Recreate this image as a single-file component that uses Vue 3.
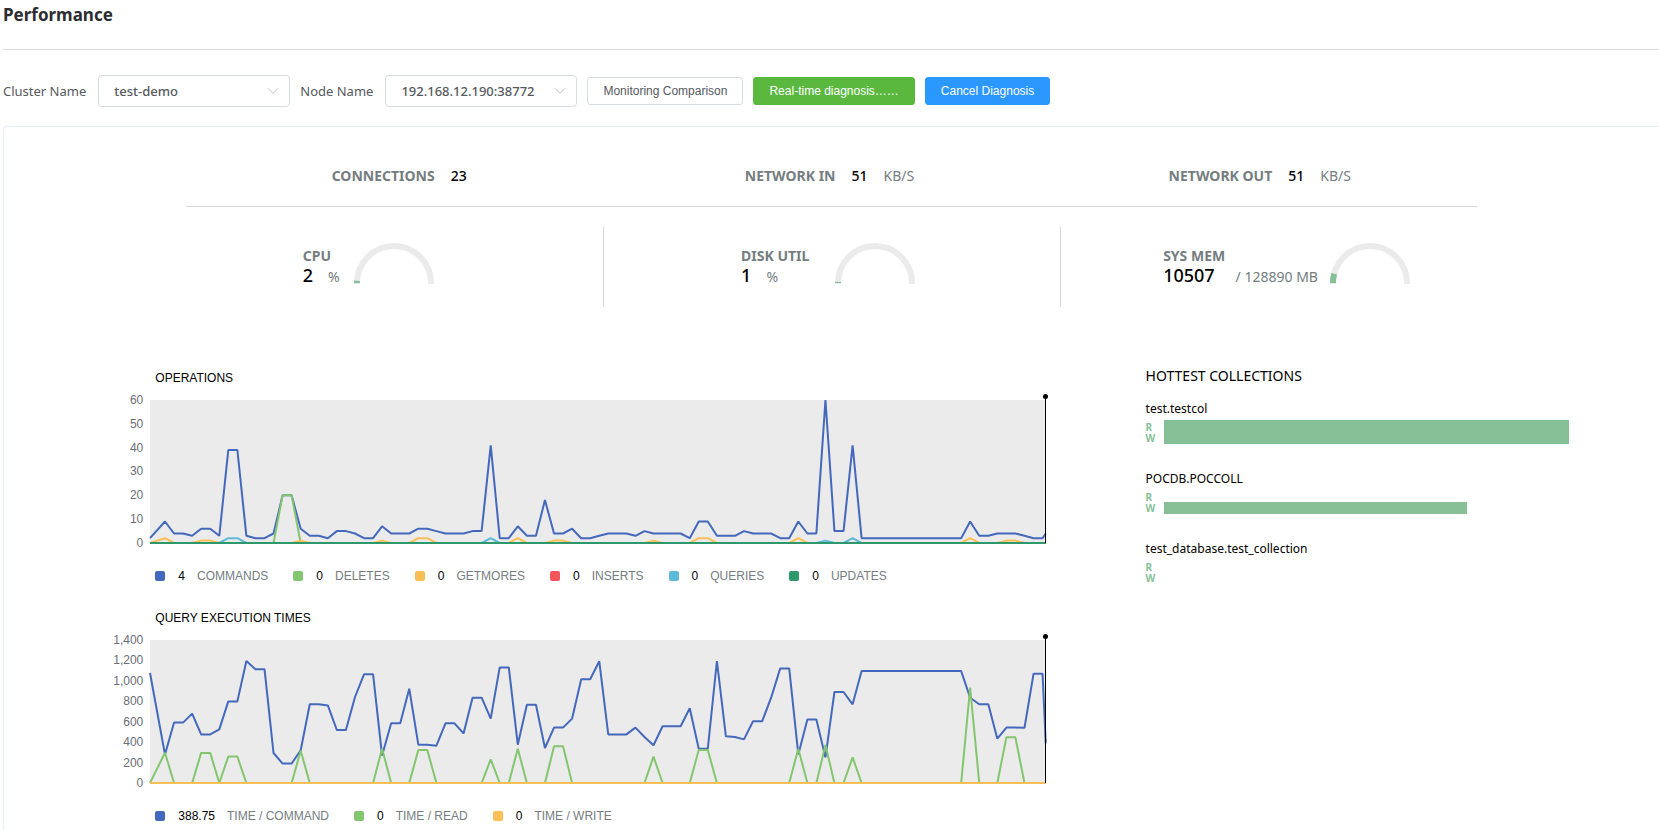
<script setup>
import { ref } from 'vue'

const cluster = ref('test-demo')
const node = ref('192.168.12.190:38772')

const traffic = [
  { label: 'CONNECTIONS', value: '23', unit: '' },
  { label: 'NETWORK IN', value: '51', unit: 'KB/S' },
  { label: 'NETWORK OUT', value: '51', unit: 'KB/S' }
]

const gauges = [
  { key: 'cpu', label: 'CPU', value: '2', unit: '%', percent: 2 },
  { key: 'disk', label: 'DISK UTIL', value: '1', unit: '%', percent: 1 },
  { key: 'mem', label: 'SYS MEM', value: '10507', unit: '/ 128890 MB', percent: 8 }
]

// Samples arrive every STEP units; the first and last ones sit on the plot edges.
const WIDTH = 897
const HEIGHT = 143
const FIRST = 15
const STEP = 9.06

// Each point is [sample index, value]; -2 is the left edge and 99 the right edge.
function line(points, max) {
  return points
    .map(([k, v]) => {
      const x = k === -2 ? 0 : k === 99 ? WIDTH : FIRST + k * STEP
      const y = HEIGHT - (v / max) * HEIGHT
      return `${x.toFixed(1)},${y.toFixed(1)}`
    })
    .join(' ')
}

// Builds a series that is zero except for [from, to, value] plateaus.
function bursts(list, head = null) {
  const points = [[-2, 0]]
  if (head !== null) points.push([0, head], [1, 0])
  for (const [from, to, v] of list) points.push([from - 1, 0], [from, v], [to, v], [to + 1, 0])
  points.push([99, 0])
  return points
}

// Turns a list of values for consecutive samples into points.
function samples(start, values, end) {
  return [[-2, start], ...values.map((v, k) => [k, v]), [99, end]]
}

const commands = samples(2, [
  9, 4, 4, 3, 6, 6, 3, 39, 39, 3, 2, 2, 4, 20, 20, 6, 3, 3, 2, 5, 5, 4, 2, 2, 7,
  4, 4, 4, 6, 6, 5, 4, 4, 4, 5, 5, 41, 2, 2, 7, 3, 3, 18, 4, 4, 6, 2, 2, 3, 4,
  4, 4, 3, 5, 4, 4, 4, 4, 2, 9, 9, 3, 3, 3, 5, 4, 4, 4, 2, 2, 9, 4, 4, 60, 5,
  5, 41, 2, 2, 2, 2, 2, 2, 2, 2, 2, 2, 2, 2, 9, 3, 3, 4, 4, 4, 3, 2, 2
], 4)

const commandTimes = samples(1077, [
  280, 591, 591, 679, 476, 476, 525, 799, 799, 1194, 1113, 1113, 294, 190, 190, 320, 770, 770, 760, 519,
  519, 842, 1064, 1064, 268, 584, 584, 923, 375, 375, 365, 584, 584, 486, 835, 835, 630, 1132, 1132, 375,
  767, 767, 343, 542, 542, 630, 1015, 1015, 1191, 476, 476, 476, 542, 450, 369, 555, 555, 555, 731, 336,
  336, 1194, 457, 450, 427, 604, 604, 835, 1122, 1122, 280, 623, 623, 251, 891, 891, 770, 1096, 1096, 1096,
  1096, 1096, 1096, 1096, 1096, 1096, 1096, 1096, 1096, 835, 770, 770, 434, 542, 542, 540, 1070, 1070
], 388.75)

const charts = [
  {
    title: 'OPERATIONS',
    max: 60,
    ticks: ['60', '50', '40', '30', '20', '10', '0'],
    series: [
      { name: 'COMMANDS', value: '4', color: '#4468bb', points: commands },
      { name: 'DELETES', value: '0', color: '#84c56f', points: bursts([[13, 14, 20]]) },
      {
        name: 'GETMORES', value: '0', color: '#fcbf56',
        points: bursts([
          [4, 5, 1], [15, 15, 1], [24, 24, 1], [28, 29, 2], [39, 39, 2], [43, 44, 1], [54, 54, 1],
          [59, 60, 2], [70, 70, 2], [89, 89, 2], [93, 94, 1]
        ], 2)
      },
      { name: 'INSERTS', value: '0', color: '#f0585c', points: bursts([]) },
      { name: 'QUERIES', value: '0', color: '#60b9d8', points: bursts([[7, 8, 2], [36, 36, 2], [73, 73, 1], [76, 76, 2]]) },
      { name: 'UPDATES', value: '0', color: '#2d986c', points: bursts([]) }
    ]
  },
  {
    title: 'QUERY EXECUTION TIMES',
    max: 1400,
    ticks: ['1,400', '1,200', '1,000', '800', '600', '400', '200', '0'],
    series: [
      { name: 'TIME / COMMAND', value: '388.75', color: '#4468bb', points: commandTimes },
      {
        name: 'TIME / READ', value: '0', color: '#84c56f',
        points: bursts([
          [4, 5, 295], [7, 8, 258], [15, 15, 315], [24, 24, 336], [28, 29, 322], [36, 36, 232], [39, 39, 336],
          [43, 44, 359], [54, 54, 258], [59, 60, 322], [70, 70, 336], [73, 73, 372], [76, 76, 251],
          [89, 89, 933], [93, 94, 447]
        ], 297)
      },
      { name: 'TIME / WRITE', value: '0', color: '#fcbf56', points: bursts([]) }
    ]
  }
]

const collections = [
  { name: 'test.testcol', read: 100, write: 100 },
  { name: 'POCDB.POCCOLL', read: 0, write: 75 },
  { name: 'test_database.test_collection', read: 0, write: 0 }
]
</script>

<template>
  <main class="page">
    <h1 class="title">Performance</h1>

    <form class="toolbar" @submit.prevent>
      <label class="field-label" for="cluster">Cluster Name</label>
      <span class="select-box">
        <select id="cluster" v-model="cluster">
          <option>test-demo</option>
        </select>
        <svg class="chevron" viewBox="0 0 12 8" aria-hidden="true"><path d="M1 1.2 6 6.4 11 1.2" /></svg>
      </span>
      <label class="field-label" for="node">Node Name</label>
      <span class="select-box">
        <select id="node" v-model="node">
          <option>192.168.12.190:38772</option>
        </select>
        <svg class="chevron" viewBox="0 0 12 8" aria-hidden="true"><path d="M1 1.2 6 6.4 11 1.2" /></svg>
      </span>
      <button type="button" class="btn">Monitoring Comparison</button>
      <button type="button" class="btn success">Real-time diagnosis……</button>
      <button type="button" class="btn primary">Cancel Diagnosis</button>
    </form>

    <section class="panel">
      <div class="summary">
        <div class="traffic">
          <p v-for="item in traffic" :key="item.label" class="traffic-item">
            <strong>{{ item.label }}</strong>
            <span class="figure">{{ item.value }}</span>
            <span v-if="item.unit">{{ item.unit }}</span>
          </p>
        </div>
        <div class="gauges">
          <div v-for="g in gauges" :key="g.key" class="gauge" :class="g.key">
            <div class="gauge-text">
              <strong>{{ g.label }}</strong>
              <div class="gauge-row">
                <span class="big">{{ g.value }}</span>
                <span>{{ g.unit }}</span>
              </div>
            </div>
            <svg class="dial" viewBox="0 0 80 42" aria-hidden="true">
              <path class="track" d="M3 41V40A37 37 0 0 1 77 40V41" />
              <path class="level" pathLength="100" d="M3 40A37 37 0 0 1 77 40" :stroke-dasharray="`${g.percent} 200`" />
            </svg>
          </div>
        </div>
      </div>

      <div class="details">
        <div class="charts">
          <article v-for="chart in charts" :key="chart.title" class="chart">
            <h2 class="chart-title">{{ chart.title }}</h2>
            <div class="chart-body">
              <div class="axis">
                <span v-for="t in chart.ticks" :key="t">{{ t }}</span>
              </div>
              <div class="plot">
                <svg class="lines" :viewBox="`0 0 ${WIDTH} ${HEIGHT}`" preserveAspectRatio="none" aria-hidden="true">
                  <polyline
                    v-for="s in chart.series"
                    :key="s.name"
                    :points="line(s.points, chart.max)"
                    :stroke="s.color"
                  />
                </svg>
                <span class="cursor"></span>
              </div>
            </div>
            <ul class="legend">
              <li v-for="s in chart.series" :key="s.name">
                <i class="swatch" :style="{ background: s.color }"></i>
                <span class="legend-value">{{ s.value }}</span>
                <span>{{ s.name }}</span>
              </li>
            </ul>
          </article>
        </div>

        <aside class="hottest">
          <h2 class="hottest-title">HOTTEST COLLECTIONS</h2>
          <section v-for="c in collections" :key="c.name" class="collection">
            <h3>{{ c.name }}</h3>
            <div class="usage">
              <div class="usage-keys"><span>R</span><span>W</span></div>
              <div class="usage-bars">
                <div class="bar" :style="{ width: c.read + '%' }"></div>
                <div class="bar" :style="{ width: c.write + '%' }"></div>
              </div>
            </div>
          </section>
        </aside>
      </div>
    </section>
  </main>
</template>

<style>
body {
  margin: 0;
  background: #fff;
}
</style>

<style scoped>
.page {
  display: flex;
  flex-direction: column;
  box-sizing: border-box;
  min-height: 100vh;
  padding-left: 3px;
  overflow: hidden;
  color: #757d7f;
  font-family: "Noto Sans", "Open Sans", sans-serif;
  font-size: 14px;
  line-height: 20px;
}

h1,
h2,
h3,
p,
ul {
  margin: 0;
  padding: 0;
}

.title {
  padding: 3px 0 22px;
  border-bottom: 1px solid #d8dbe0;
  color: #2b2d30;
  font-size: 17px;
  font-weight: 700;
  line-height: 24px;
}

.toolbar {
  display: flex;
  align-items: center;
  gap: 10px;
  padding: 25px 0 19px;
}

.field-label {
  margin-right: 2px;
  color: #56595e;
  font-size: 13px;
  white-space: nowrap;
}

.select-box {
  position: relative;
  width: 192px;
}

.select-box select {
  display: block;
  box-sizing: border-box;
  width: 100%;
  height: 32px;
  padding: 0 30px 0 15px;
  border: 1px solid #d8dce4;
  border-radius: 4px;
  background: #fff;
  color: #56595e;
  font: 500 13px/30px "Noto Sans", "Open Sans", sans-serif;
  appearance: none;
}

.chevron {
  position: absolute;
  top: 12px;
  right: 11px;
  width: 12px;
  height: 8px;
  fill: none;
  stroke: #c0c4cc;
  pointer-events: none;
}

.btn {
  height: 28px;
  padding: 0 15px;
  border: 1px solid #d8dce4;
  border-radius: 3px;
  background: #fff;
  color: #56595e;
  font: 12px/14px "Liberation Sans", Arial, sans-serif;
  white-space: nowrap;
}

.btn.success {
  border-color: #5ab83f;
  background: #5ab83f;
  color: #fff;
}

.btn.primary {
  border-color: #2a98fe;
  background: #2a98fe;
  color: #fff;
}

.panel {
  flex: 1;
  border: solid #e8ecf3;
  border-width: 1px 0 0 1px;
  border-top-left-radius: 4px;
}

.summary {
  width: 78%;
  margin-left: 11%;
}

.traffic {
  display: grid;
  grid-template-columns: repeat(3, 1fr);
  padding: 39px 0 20px;
  border-bottom: 1px solid #d6d6d6;
}

.traffic-item {
  display: flex;
  justify-content: center;
  gap: 16px;
  padding-right: 4px;
}

.figure,
.big {
  color: #000;
  font-weight: 500;
}

.gauges {
  display: grid;
  grid-template-columns: 417fr 457fr 417fr;
  padding-top: 20px;
}

.gauge {
  display: flex;
  align-items: center;
  box-sizing: border-box;
  height: 80px;
  border-left: 1px solid #d6d6d6;
}

.gauge.cpu {
  border-left: 0;
  padding-left: 28%;
}

.gauge.disk {
  padding-left: 30%;
}

.gauge.mem {
  padding-left: 24.5%;
}

.gauge.cpu .dial {
  margin-left: 14px;
}

.gauge.disk .dial {
  margin-left: 26px;
}

.gauge.mem .gauge-row {
  gap: 21px;
}

.gauge-text {
  padding-bottom: 1px;
  white-space: nowrap;
}

.gauge-text strong {
  display: block;
  line-height: 18px;
}

.gauge-row {
  display: flex;
  align-items: baseline;
  gap: 15px;
}

.big {
  font-size: 18px;
}

.dial {
  width: 80px;
  height: 42px;
  margin-left: 12px;
  padding-bottom: 6px;
  fill: none;
  stroke-width: 6;
}

.track {
  stroke: #ebebeb;
}

.level {
  stroke: #87c096;
}

.details {
  display: flex;
  padding: 63px 0 4px 6%;
  font-family: "Liberation Sans", Arial, sans-serif;
  font-size: 12px;
  line-height: 16px;
}

.charts {
  display: flex;
  flex-direction: column;
  gap: 26px;
  width: 60.6%;
  margin-right: 6.4%;
}

.chart-title {
  padding-left: 52px;
  color: #000;
  font-size: 12px;
  font-weight: 500;
}

.chart-body {
  display: flex;
  gap: 7px;
  margin-top: 14px;
}

.axis {
  display: flex;
  flex-direction: column;
  justify-content: space-between;
  width: 40px;
  margin: -8px 0;
  color: #6a6e77;
  text-align: right;
}

.plot {
  position: relative;
  flex: 1;
  height: 143px;
  background: #ebebeb;
}

.lines {
  display: block;
  width: 100%;
  height: 143px;
  fill: none;
  stroke-width: 2;
  stroke-linejoin: bevel;
  overflow: visible;
}

.lines polyline {
  vector-effect: non-scaling-stroke;
}

.cursor {
  position: absolute;
  top: -4px;
  right: 0;
  bottom: 0;
  width: 1px;
  background: #000;
}

.cursor::before {
  content: "";
  position: absolute;
  top: -2px;
  left: -2px;
  width: 5px;
  height: 5px;
  border-radius: 50%;
  background: #000;
}

.legend {
  display: flex;
  gap: 25px;
  margin-top: 25px;
  padding-left: 52px;
  list-style: none;
  white-space: nowrap;
}

.legend li {
  display: flex;
  align-items: center;
  gap: 12px;
}

.swatch {
  width: 10px;
  height: 10px;
  margin-right: 1px;
  border-radius: 2px;
}

.legend-value {
  color: #000;
}

.hottest {
  width: 27.2%;
  color: #000;
  font-family: "Noto Sans", "Open Sans", sans-serif;
}

.hottest-title {
  margin-bottom: 19px;
  font-size: 14px;
  font-weight: 400;
  line-height: 12px;
}

.collection {
  height: 70px;
}

.collection h3 {
  font-size: 12px;
  font-weight: 400;
  line-height: 16px;
}

.usage {
  display: flex;
  margin-top: 3px;
}

.usage-keys {
  display: flex;
  flex-direction: column;
  width: 18px;
  padding-top: 2px;
  color: #87c096;
  font-size: 10px;
  font-weight: 700;
  line-height: 11px;
}

.usage-bars {
  flex: 1;
}

.bar {
  height: 12px;
  background: #87c096;
}
</style>
